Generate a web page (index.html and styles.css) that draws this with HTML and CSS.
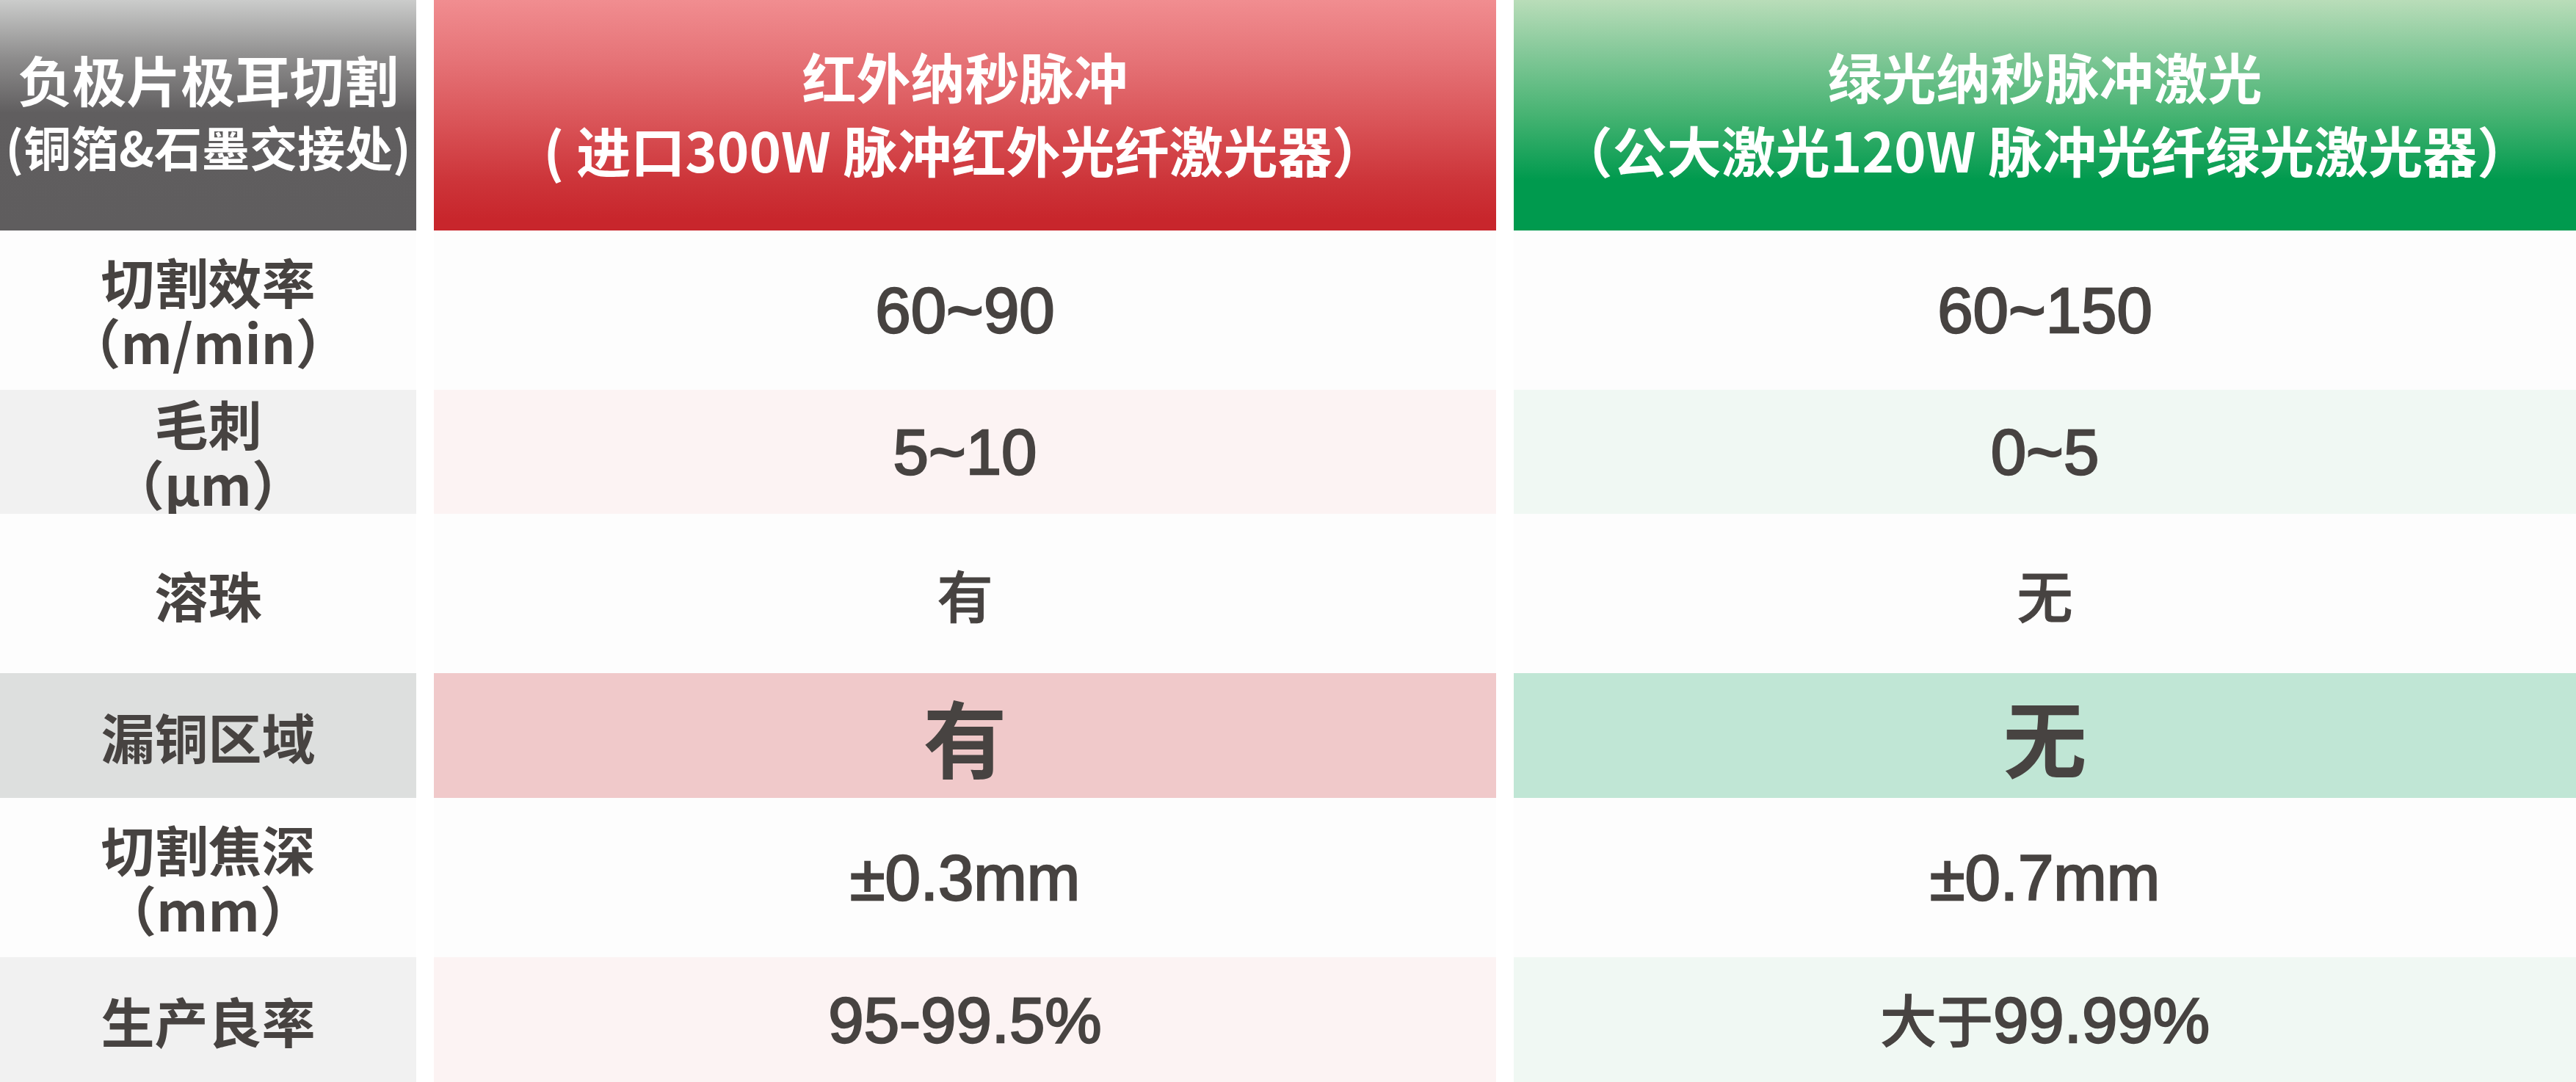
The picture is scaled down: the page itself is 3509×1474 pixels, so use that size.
FILE: index.html
```html
<!DOCTYPE html>
<html lang="zh-CN">
<head>
<meta charset="utf-8">
<title>负极片极耳切割对比</title>
<link rel="stylesheet" href="styles.css">
</head>
<body>
<div class="table">
  <div class="cell head head-gray">
    <div class="hl">负极片极耳切割</div>
    <div class="hl hl-small">(铜箔&amp;石墨交接处)</div>
  </div>
  <div class="cell head head-red">
    <div class="hl">红外纳秒脉冲</div>
    <div class="hl">( 进口300W 脉冲红外光纤激光器）</div>
  </div>
  <div class="cell head head-green">
    <div class="hl">绿光纳秒脉冲激光</div>
    <div class="hl">（公大激光120W 脉冲光纤绿光激光器）</div>
  </div>

  <div class="cell label plain"><div>切割效率</div><div>（m/min）</div></div>
  <div class="cell val plain"><span class="num">60~90</span></div>
  <div class="cell val plain"><span class="num">60~150</span></div>

  <div class="cell label tint-gray"><div>毛刺</div><div>（μm）</div></div>
  <div class="cell val tint-red"><span class="num">5~10</span></div>
  <div class="cell val tint-green"><span class="num">0~5</span></div>

  <div class="cell label plain"><div>溶珠</div></div>
  <div class="cell val plain"><span class="cjk">有</span></div>
  <div class="cell val plain"><span class="cjk">无</span></div>

  <div class="cell label strong-gray"><div>漏铜区域</div></div>
  <div class="cell val strong-red"><span class="big">有</span></div>
  <div class="cell val strong-green"><span class="big">无</span></div>

  <div class="cell label plain"><div>切割焦深</div><div>（mm）</div></div>
  <div class="cell val plain"><span class="num">±0.3mm</span></div>
  <div class="cell val plain"><span class="num">±0.7mm</span></div>

  <div class="cell label tint-gray"><div>生产良率</div></div>
  <div class="cell val tint-red"><span class="num">95-99.5%</span></div>
  <div class="cell val tint-green"><span class="num"><span class="num-cjk">大于</span>99.99%</span></div>
</div>
</body>
</html>
```

FILE: styles.css
```css
html, body {
  margin: 0;
  padding: 0;
  background: #ffffff;
}

body {
  width: 3509px;
  height: 1474px;
  overflow: hidden;
  font-family: "Noto Sans CJK SC", "Noto Sans", sans-serif;
  color: #474341;
}

.table {
  display: grid;
  grid-template-columns: 567px 1fr 1fr;
  grid-template-rows: 314px 217px 169px 217px 170px 217px 170px;
  column-gap: 24px;
  width: 3509px;
  height: 1474px;
}

.cell {
  display: flex;
  flex-direction: column;
  align-items: center;
  justify-content: center;
  text-align: center;
  white-space: nowrap;
}

/* header */
.head {
  color: #ffffff;
  font-weight: 700;
  font-size: 74px;
  line-height: 100px;
  padding-bottom: 8px;
  box-sizing: border-box;
}

.head-gray {
  background: linear-gradient(180deg, #cbcccb 0%, #8e8d8d 25%, #605e5f 49%, #5f5d5e 100%);
  line-height: 92px;
}

.hl-small {
  font-size: 65px;
}

.head-red {
  background: linear-gradient(180deg, #f18d90 0%, #e67478 25%, #da5559 52%, #cd353a 78%, #c8262c 95%);
}

.head-green {
  background: linear-gradient(180deg, #b9ddb9 0%, #86c99a 22%, #46b372 50%, #009a4e 78%, #009a4e 100%);
}

/* body rows */
.label {
  font-weight: 700;
  font-size: 73px;
  line-height: 82px;
}

.plain { background: #fdfdfd; }
.tint-gray { background: #f1f1f1; }
.tint-red { background: #fcf3f3; }
.tint-green { background: #f0f8f3; }
.strong-gray { background: #dddfde; }
.strong-red { background: #f0c9ca; }
.strong-green { background: #c0e6d5; }

.num {
  font-family: "Liberation Sans", "Noto Sans CJK SC", sans-serif;
  font-size: 87px;
  line-height: 1;
  -webkit-text-stroke: 2.4px #474341;
}

.num-cjk {
  font-family: "Noto Sans CJK SC", sans-serif;
  font-size: 77px;
  font-weight: 500;
  -webkit-text-stroke: 1px #474341;
}

.cjk {
  font-size: 76px;
  font-weight: 500;
  line-height: 1;
  -webkit-text-stroke: 1px #474341;
}

.big {
  font-size: 114px;
  font-weight: 700;
  line-height: 1;
}
```
